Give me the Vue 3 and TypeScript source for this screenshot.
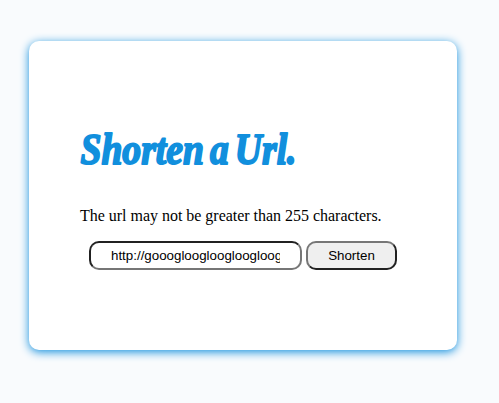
<script setup lang="ts">
import { ref } from 'vue'

const title = 'Shorten a Url.'
const url = ref('http://gooogloogloogloogloogle.com')
</script>

<template>
  <main class="page">
    <section class="card">
      <h1 class="title">
        <svg class="title-art" width="224" height="50" viewBox="0 0 224 50">
          <text x="0.5" y="38.5" textLength="216" lengthAdjust="spacingAndGlyphs">{{ title }}</text>
        </svg>
      </h1>
      <p class="hint">The url may not be greater than 255 characters.</p>
      <form class="form" @submit.prevent>
        <input v-model="url" class="field" type="text" />
        <button class="submit" type="submit">Shorten</button>
      </form>
    </section>
  </main>
</template>

<style>
body {
  background: #f9fbfd;
}
</style>

<style scoped>
.page {
  padding: 41px 42px 53px 29px;
}
.card {
  box-sizing: border-box;
  height: 309px;
  padding: 84px 50px 0 51px;
  border-radius: 10px;
  background: #fff;
  box-shadow: 0 2px 10px #118fdd;
}
.title {
  height: 50px;
  margin: 0;
}
.title-art {
  display: block;
  overflow: visible;
  font-family: "Liberation Serif", serif;
  font-size: 45px;
  font-style: italic;
  font-weight: 700;
  word-spacing: -4px;
  fill: #118fdd;
  stroke: #118fdd;
  stroke-width: 2px;
  stroke-linejoin: round;
}
.hint {
  margin: 32px 0 0;
  font-family: "Liberation Serif", serif;
  font-size: 16px;
  line-height: 18px;
  letter-spacing: -0.02px;
  white-space: nowrap;
  color: #000;
}
.form {
  display: flex;
  gap: 4px;
  margin: 16px 0 0 9px;
}
.field,
.submit {
  box-sizing: border-box;
  height: 29px;
  margin: 0;
  border-width: 2px;
  border-radius: 10px;
  font-family: "Liberation Sans", Arial, sans-serif;
  font-size: 13.333px;
  color: #000;
}
.field {
  width: 213px;
  padding: 5px 20px;
  border-style: inset;
  border-color: #767676;
  background: #fff;
}
.submit {
  width: 91px;
  padding: 5px 0;
  border-style: outset;
  border-color: #767676;
  background: #efefef;
}
</style>
